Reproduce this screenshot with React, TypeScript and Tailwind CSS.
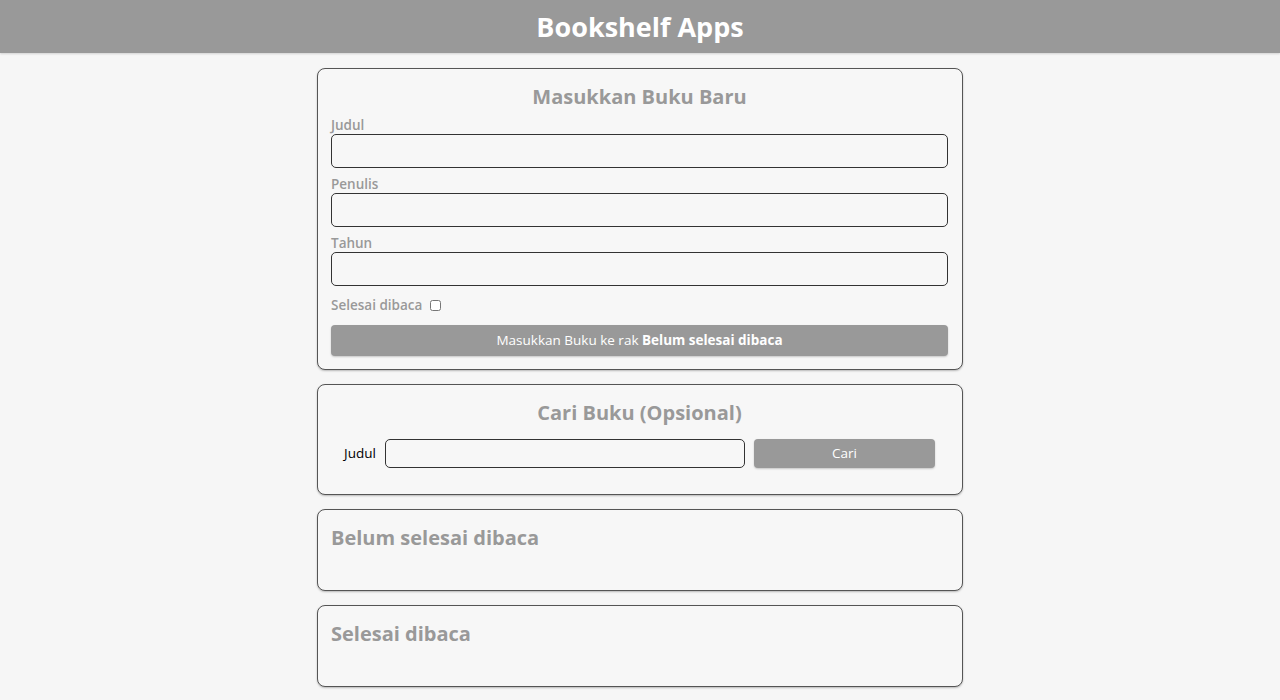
import React, { useState } from 'react';

const font = { fontFamily: '"Open Sans", "Noto Sans", sans-serif' };

const inputClass =
  'w-full h-[34px] rounded-[5px] border-[1.5px] border-[#333] bg-[#f7f7f7] px-2 text-sm outline-none';

const labelClass = 'block text-[13.5px] leading-[18px] font-semibold text-[#999]';

const cardClass =
  'rounded-lg border border-[#555] bg-[#f7f7f7] pl-[13px] pr-[14px] pt-[14px] shadow-[0_1px_2px_rgba(0,0,0,0.25)]';

const App: React.FC = () => {
  const [title, setTitle] = useState('');
  const [author, setAuthor] = useState('');
  const [year, setYear] = useState('');
  const [done, setDone] = useState(false);
  const [query, setQuery] = useState('');

  return (
    <div className="min-h-[700px] bg-[#f6f6f6] pb-4" style={font}>
      {/* Header */}
      <header className="h-[53px] bg-[#999999] flex items-center justify-center shadow-[0_1px_2px_rgba(0,0,0,0.15)]">
        <h1 className="text-[27px] font-bold text-white leading-none">Bookshelf Apps</h1>
      </header>

      <main className="w-[646px] mx-auto mt-[15px] flex flex-col gap-[14px]">
        {/* Input section */}
        <section className={`${cardClass} pb-[13px]`}>
          <h2 className="text-center text-[20px] leading-[28px] font-bold text-[#999] mb-[5px]">
            Masukkan Buku Baru
          </h2>
          <form onSubmit={(e) => e.preventDefault()}>
            <label className={labelClass}>Judul</label>
            <input className={inputClass} value={title} onChange={(e) => setTitle(e.target.value)} />

            <label className={`${labelClass} mt-[7px]`}>Penulis</label>
            <input className={inputClass} value={author} onChange={(e) => setAuthor(e.target.value)} />

            <label className={`${labelClass} mt-[7px]`}>Tahun</label>
            <input className={inputClass} value={year} onChange={(e) => setYear(e.target.value)} />

            <div className="mt-[10px] flex items-center gap-[8px] h-[18px]">
              <label className="text-[13.5px] font-semibold text-[#999]">Selesai dibaca</label>
              <input
                type="checkbox"
                checked={done}
                onChange={(e) => setDone(e.target.checked)}
                className="w-[11px] h-[11px] m-0"
              />
            </div>

            <button
              type="submit"
              className="mt-[11px] w-full h-[31px] rounded bg-[#999] text-white text-[13.5px] shadow-[0_1px_2px_rgba(0,0,0,0.2)]"
            >
              Masukkan Buku ke rak{' '}
              <span className="font-bold">{done ? 'Selesai dibaca' : 'Belum selesai dibaca'}</span>
            </button>
          </form>
        </section>

        {/* Search section */}
        <section className={`${cardClass} pb-[26px]`}>
          <h2 className="text-center text-[20px] leading-[28px] font-bold text-[#999]">Cari Buku (Opsional)</h2>
          <form onSubmit={(e) => e.preventDefault()} className="mt-[12px] px-[13px] flex items-center">
            <label className="w-[41px] shrink-0 text-[13.5px] text-black">Judul</label>
            <input
              className="w-[360px] h-[29px] rounded-[5px] border-[1.5px] border-[#333] bg-[#f7f7f7] px-2 text-sm outline-none"
              value={query}
              onChange={(e) => setQuery(e.target.value)}
            />
            <button
              type="submit"
              className="ml-[9px] flex-1 h-[29px] rounded bg-[#999] text-white text-[13.5px] shadow-[0_1px_2px_rgba(0,0,0,0.2)]"
            >
              Cari
            </button>
          </form>
        </section>

        {/* Shelves */}
        <section className={`${cardClass} pb-[38px]`}>
          <h2 className="text-[20px] leading-[28px] font-bold text-[#999]">Belum selesai dibaca</h2>
        </section>

        <section className={`${cardClass} pb-[38px]`}>
          <h2 className="text-[20px] leading-[28px] font-bold text-[#999]">Selesai dibaca</h2>
        </section>
      </main>
    </div>
  );
};

export default App;
